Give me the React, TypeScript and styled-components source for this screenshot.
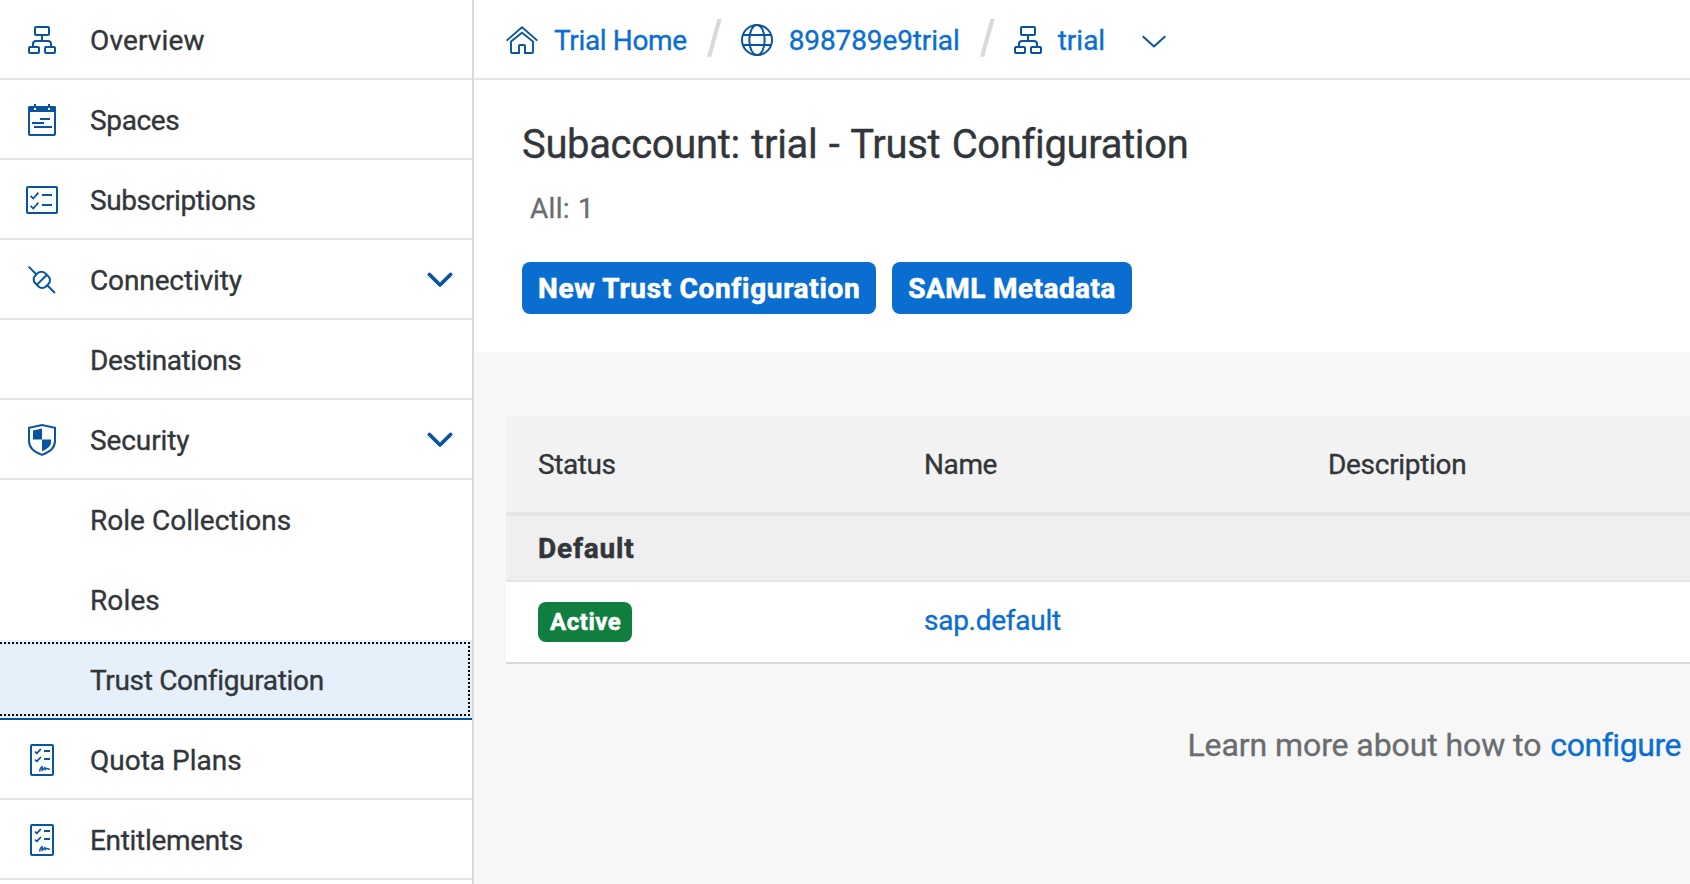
import React from "react";
import styled, { createGlobalStyle, css } from "styled-components";

const color = {
  text: "#32363a",
  muted: "#6a6d70",
  link: "#0a6ed1",
  icon: "#0854a0",
  line: "#e5e5e5",
  lineStrong: "#d9d9d9",
  page: "#f7f7f7",
};

const GlobalStyle = createGlobalStyle`
  * { box-sizing: border-box; }
  body {
    margin: 0;
    overflow: hidden;
    background: ${color.page};
    color: ${color.text};
    font-family: Roboto, "Liberation Sans", sans-serif;
    font-size: 28px;
    -webkit-text-stroke: 0.35px;
  }
`;

/* ---------- Icons ---------- */

const Glyph = styled.svg`
  flex: none;
  display: block;
  width: 32px;
  height: 32px;
  fill: none;
  stroke: ${color.icon};
  stroke-width: 2;
`;

const OrgIcon = () => (
  <Glyph viewBox="0 0 32 32">
    <rect x="9" y="3" width="14" height="8" rx="1" />
    <path d="M16 11v6M7 23v-3a3 3 0 0 1 3-3h12a3 3 0 0 1 3 3v3" />
    <rect x="3" y="23" width="10" height="6" rx="1" />
    <rect x="19" y="23" width="10" height="6" rx="1" />
  </Glyph>
);

const SpacesIcon = () => (
  <Glyph viewBox="0 0 32 32">
    <path
      fill={color.icon}
      stroke="none"
      fillRule="evenodd"
      d="M8 0h2v2h12V0h2v2h5l1 1v5H2V3l1-1h5ZM8 4v2h2V4ZM22 4v2h2V4Z"
    />
    <path d="M3 7v23a1 1 0 0 0 1 1h24a1 1 0 0 0 1-1V7M14 15h10M6 19h12M8 23h18" />
  </Glyph>
);

const SubscriptionsIcon = () => (
  <Glyph viewBox="0 0 32 32">
    <rect x="1" y="3" width="30" height="26" rx="1" />
    <path d="M16 11h10M16 21h10" />
    <path strokeWidth="1.7" d="M4.6 11.8 7.2 14.6 12.4 8.6M4.6 21.8 7.2 24.6 12.4 18.6" />
  </Glyph>
);

const ConnectivityIcon = () => (
  <Glyph viewBox="0 0 32 32">
    <g strokeWidth="2" transform="rotate(45 15.8 15.8)">
      <path d="M-2.8 15.8h11M23.4 15.8h11M15.8 9v13.6" />
      <rect x="8.2" y="8.8" width="15.2" height="14" rx="5.2" />
    </g>
  </Glyph>
);

const SecurityIcon = () => (
  <Glyph viewBox="0 0 32 32">
    <path d="M16 1.1 29 3.7V17c0 7-6 11.4-13 13.9C9 28.4 3 24 3 17V3.7Z" />
    <path
      fill={color.icon}
      stroke="none"
      d="M16 4.6V15.4H7V6.4ZM16 15.4h9V18c0 4.3-4 7.2-9 9.2Z"
    />
  </Glyph>
);

const PlanIcon = () => (
  <Glyph viewBox="0 0 32 32">
    <rect x="5" y="1" width="22" height="30" rx="1" />
    <path d="M18 7h6M18 15h6" />
    <path
      strokeWidth="1.8"
      d="M9 7.6 10.9 9.3 14.9 5M9 15.6 10.9 17.3 14.9 13"
    />
    <path
      strokeWidth="1.4"
      strokeLinejoin="round"
      d="M13.6 27.6C14 25.2 15 23 16.2 22.7L16 26.6 18.9 23.2 19 25.7C20.6 24.4 21.8 24 22.3 25.1L23.9 25.2"
    />
  </Glyph>
);

const HomeIcon = () => (
  <Glyph viewBox="0 0 32 32">
    <path strokeWidth="1.8" d="M.6 16.6 16 3.2 31.4 16.6" />
    <path
      strokeWidth="1.9"
      d="M5 17.6 16 8.8 27 17.6V28a1 1 0 0 1-1 1H19V22a1 1 0 0 0-1-1h-4a1 1 0 0 0-1 1v7H6a1 1 0 0 1-1-1Z"
    />
  </Glyph>
);

const GlobeIcon = () => (
  <Glyph viewBox="0 0 32 32">
    <circle cx="16" cy="16" r="15" />
    <ellipse cx="16" cy="16" rx="7.7" ry="15" />
    <path d="M2 11h28M2 21h28" />
  </Glyph>
);

const ExpandIcon = () => (
  <Glyph viewBox="0 0 32 32">
    <path
      strokeWidth="3.6"
      strokeLinecap="round"
      strokeLinejoin="round"
      d="M5.3 10.4 16 21 26.7 10.4"
    />
  </Glyph>
);

const MenuIcon = () => (
  <Glyph viewBox="0 0 32 32">
    <path d="M4.7 12.2 16 22.5 27.3 12.2" />
  </Glyph>
);

const SlashSvg = styled.svg<{ $after?: number }>`
  flex: none;
  display: block;
  width: 15px;
  height: 38px;
  margin: 0 ${(p) => p.$after ?? 19}px 4px 20px;
  fill: ${color.lineStrong};
`;

const Slash = ({ after }: { after?: number }) => (
  <SlashSvg viewBox="0 0 15 38" $after={after}>
    <path d="M10.3 0h4.3L4.3 37.8H0Z" />
  </SlashSvg>
);

/* ---------- Page ---------- */

const Page = styled.div`
  display: flex;
  width: 100%;
  height: 884px;
  overflow: hidden;
`;

const Text = styled.span<{ $track?: number }>`
  letter-spacing: ${(p) => p.$track ?? 0}px;
  white-space: nowrap;
`;

const Link = styled.a<{ $track?: number }>`
  color: ${color.link};
  letter-spacing: ${(p) => p.$track ?? 0}px;
  text-decoration: none;
  white-space: nowrap;
`;

/* ---------- Side navigation ---------- */

const SideNav = styled.nav`
  flex: none;
  width: 474px;
  background: #fff;
  border-right: 2px solid ${color.lineStrong};
`;

const NavItem = styled.div<{ $plain?: boolean; $selected?: boolean }>`
  position: relative;
  display: flex;
  align-items: center;
  height: 80px;
  padding: 2px 16px 0 26px;
  border-bottom: 2px solid ${(p) => (p.$plain ? "transparent" : color.line)};

  ${(p) =>
    p.$selected &&
    css`
      background: #e5f0fa;
      border-bottom-color: ${color.icon};

      &::after {
        content: "";
        position: absolute;
        inset: 2px 2px 2px 0;
        background:
          repeating-linear-gradient(90deg, #000 0 2px, transparent 2px 4px) 0 0 / 100% 2px no-repeat,
          repeating-linear-gradient(90deg, #000 0 2px, transparent 2px 4px) 0 100% / 100% 2px no-repeat,
          repeating-linear-gradient(180deg, #000 0 2px, transparent 2px 4px) 100% 0 / 2px 100% no-repeat;
      }
    `}
`;

const NavIcon = styled.span`
  flex: none;
  width: 64px;
`;

const NavLabel = styled(Text)`
  flex: 1;
`;

type Item = {
  label: string;
  track: number;
  icon?: React.ReactNode;
  expandable?: boolean;
  plain?: boolean;
  selected?: boolean;
};

const items: Item[] = [
  { label: "Overview", track: 0.15, icon: <OrgIcon /> },
  { label: "Spaces", track: -0.35, icon: <SpacesIcon /> },
  { label: "Subscriptions", track: -0.4, icon: <SubscriptionsIcon /> },
  { label: "Connectivity", track: -0.12, icon: <ConnectivityIcon />, expandable: true },
  { label: "Destinations", track: -0.4 },
  { label: "Security", track: -0.1, icon: <SecurityIcon />, expandable: true },
  { label: "Role Collections", track: 0.02, plain: true },
  { label: "Roles", track: 0.12, plain: true },
  { label: "Trust Configuration", track: -0.33, selected: true },
  { label: "Quota Plans", track: 0, icon: <PlanIcon /> },
  { label: "Entitlements", track: -0.32, icon: <PlanIcon /> },
];

/* ---------- Main area ---------- */

const Main = styled.main`
  flex: 1;
  min-width: 0;
  display: flex;
  flex-direction: column;
`;

const Breadcrumbs = styled.div`
  display: flex;
  align-items: center;
  height: 80px;
  padding: 2px 0 0 32px;
  background: #fff;
  border-bottom: 2px solid ${color.line};
`;

const Crumb = styled.span<{ $gap?: number }>`
  display: flex;
  align-items: center;
  gap: ${(p) => p.$gap ?? 16}px;
`;

const MenuToggle = styled.span`
  margin-left: 33px;
`;

const PageHeader = styled.header`
  height: 272px;
  padding: 33px 0 0 48px;
  background: #fff;
`;

const Title = styled.h1`
  margin: 0;
  font-size: 40px;
  font-weight: 400;
  line-height: 64px;
  letter-spacing: -0.35px;
  word-spacing: 1.9px;
`;

const Count = styled.div`
  margin-top: 16px;
  padding-left: 8px;
  color: ${color.muted};
  line-height: 32px;
  letter-spacing: 0.3px;
  word-spacing: 1px;
`;

const Actions = styled.div`
  display: flex;
  gap: 16px;
  margin-top: 37px;
`;

const Button = styled.button<{ $track: number }>`
  height: 52px;
  padding: 0 16px;
  border: 0;
  border-radius: 8px;
  background: ${color.link};
  color: #fff;
  font: 700 28px Roboto, "Liberation Sans", sans-serif;
  -webkit-text-stroke: 0.6px;
  letter-spacing: ${(p) => p.$track}px;
  white-space: nowrap;
`;

const Table = styled.section`
  margin: 64px 0 0 32px;
`;

const Row = styled.div`
  display: grid;
  grid-template-columns: 386px 404px 1fr;
  align-items: center;
  height: 82px;
  padding-left: 32px;
  background: #fff;
  border-bottom: 2px solid ${color.lineStrong};
`;

const HeadRow = styled(Row)`
  height: 100px;
  background: #f2f2f2;
  border-bottom: 4px solid ${color.line};
`;

const GroupRow = styled(Row)`
  height: 66px;
  background: #efefef;
  border-bottom-color: ${color.line};
  font-weight: 700;
  -webkit-text-stroke: 0.5px;
`;

const Badge = styled.span`
  display: inline-block;
  justify-self: start;
  height: 40px;
  padding: 0 11px 0 12px;
  border-radius: 8px;
  background: #107e3e;
  color: #fff;
  font-size: 24px;
  font-weight: 700;
  line-height: 40px;
  letter-spacing: 0.55px;
  -webkit-text-stroke: 0.5px;
`;

const NameCell = styled.span`
  padding-bottom: 3px;
`;

const Hint = styled.p`
  display: flex;
  justify-content: flex-end;
  gap: 9px;
  margin: 57px 0 0;
  padding-right: 9px;
  color: ${color.muted};
  font-size: 32px;
  line-height: 48px;
`;

export default function App() {
  return (
    <Page>
      <GlobalStyle />
      <SideNav>
        {items.map((item) => (
          <NavItem key={item.label} $plain={item.plain} $selected={item.selected}>
            <NavIcon>{item.icon}</NavIcon>
            <NavLabel $track={item.track}>{item.label}</NavLabel>
            {item.expandable && <ExpandIcon />}
          </NavItem>
        ))}
      </SideNav>
      <Main>
        <Breadcrumbs>
          <Crumb>
            <HomeIcon />
            <Link $track={-0.36}>Trial Home</Link>
          </Crumb>
          <Slash />
          <Crumb>
            <GlobeIcon />
            <Link $track={-0.12}>898789e9trial</Link>
          </Crumb>
          <Slash after={17} />
          <Crumb $gap={14}>
            <OrgIcon />
            <Link $track={0}>trial</Link>
          </Crumb>
          <MenuToggle>
            <MenuIcon />
          </MenuToggle>
        </Breadcrumbs>
        <PageHeader>
          <Title>Subaccount: trial - Trust Configuration</Title>
          <Count>All: 1</Count>
          <Actions>
            <Button $track={0.67}>New Trust Configuration</Button>
            <Button $track={0.42}>SAML Metadata</Button>
          </Actions>
        </PageHeader>
        <Table>
          <HeadRow>
            <Text $track={-0.4}>Status</Text>
            <Text $track={-0.4}>Name</Text>
            <Text $track={-0.3}>Description</Text>
          </HeadRow>
          <GroupRow>
            <Text $track={0.8}>Default</Text>
          </GroupRow>
          <Row>
            <Badge>Active</Badge>
            <NameCell>
              <Link $track={-0.26}>sap.default</Link>
            </NameCell>
          </Row>
        </Table>
        <Hint>
          <Text $track={-0.08}>Learn more about how to</Text>
          <Link $track={-0.45}>configure</Link>
        </Hint>
      </Main>
    </Page>
  );
}
